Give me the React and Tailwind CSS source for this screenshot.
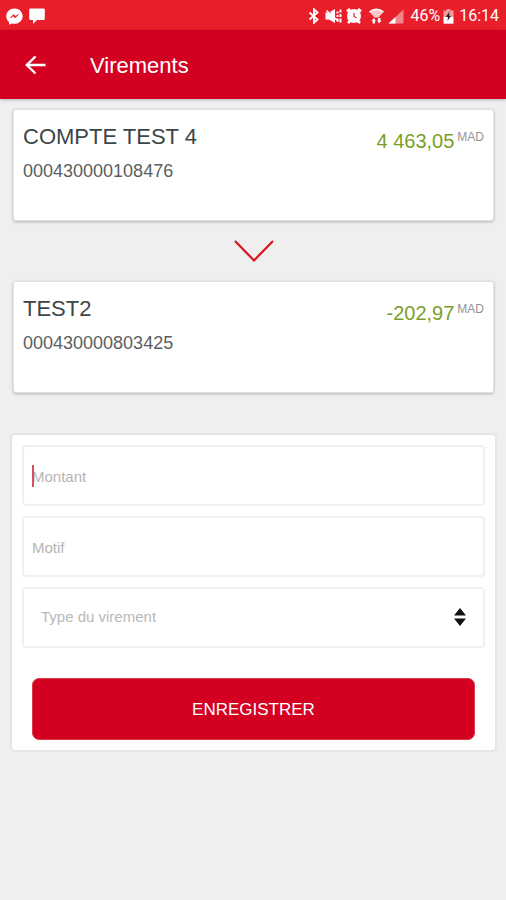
import React, { useState } from 'react';

const accounts = [
  { name: 'COMPTE TEST 4', number: '000430000108476', balance: '4 463,05' },
  { name: 'TEST2', number: '000430000803425', balance: '-202,97' },
];

function StatusBar() {
  return (
    <div className="flex items-center justify-between h-[30px] pl-[6px] pr-[7px] pt-[2px] bg-[#e91e2b] text-white">
      <div className="flex items-center gap-[6px]">
        <svg width="17" height="17" viewBox="0 0 17 17">
          <path d="M8.500 .5C3.900.5.3 3.900.3 8.200c0 2.300 1 4.300 2.700 5.700v2.800l2.700-1.300c.9.300 1.800.4 2.800.4 4.600 0 8.200-3.400 8.200-7.600S13.100.5 8.500.5z" fill="#fff" />
          <path d="M4.200 9.800l3.300-3.200 2 1.700 3-1.900-3.200 3.400-2-1.700z" fill="#e91e2b" stroke="#e91e2b" strokeWidth=".6" />
        </svg>
        <svg width="16" height="16" viewBox="0 0 16 16" fill="#fff">
          <path d="M1.500 .5h13a1.300 1.300 0 0 1 1.300 1.300v9a1.300 1.300 0 0 1-1.300 1.300H8L4 16v-3.900H1.500A1.300 1.300 0 0 1 .2 10.800v-9A1.300 1.300 0 0 1 1.500.5z" />
        </svg>
      </div>
      <div className="flex items-center">
        <svg width="12" height="16" viewBox="0 0 12 16" fill="none" stroke="#fff" strokeWidth="1.800">
          <path d="M1.500 4.500l8 7L6 14.800V1.200l3.500 3.300-8 7" />
        </svg>
        <svg className="ml-[5px]" width="17" height="16" viewBox="0 0 17 16" fill="#fff">
          <path d="M.5 4.500h3.500L10 1v14l-6-3.500H.5z" />
          <path d="M11.500 3.500h2v2h-2zM11.500 7h2v2h-2zM11.500 10.500h2v3h-2zM14.500 1.500h2v3h-2zM14.500 6h2v3h-2zM14.500 10.500h2v4h-2z" />
          <path d="M1 1l5 5" stroke="#e91e2b" strokeWidth="1.200" />
          <path d="M1.500 2.500l12 11" stroke="#fff" strokeWidth="1.500" />
        </svg>
        <svg className="ml-[4px]" width="16" height="16" viewBox="0 0 16 16">
          <path d="M1 3.500L4 .9M15 3.500L12 .9M2 15l3-3M14 15l-3-3" stroke="#fff" strokeWidth="2.600" />
          <circle cx="8" cy="8" r="7" fill="#fff" />
          <path d="M8 4.800v3.700l2.500 1.300" stroke="#e91e2b" strokeWidth="1.200" fill="none" />
        </svg>
        <svg className="ml-[7px]" width="15" height="16" viewBox="0 0 15 16" fill="#fff">
          <path d="M.5 4C4.500.3 10.500.3 14.500 4l-5 5.500h-4z" opacity=".75" />
          <path d="M.5 4C4.500.3 10.500.3 14.500 4" fill="none" stroke="#fff" strokeWidth="1.300" />
          <path d="M4.800 10l2.200 3h-1v2.500H3.600V13h-1zM10.200 15.500l-2.200-3h1V10h2.400v2.500h1z" />
        </svg>
        <svg className="ml-[4px]" width="16" height="15" viewBox="0 0 16 15">
          <path d="M15.500 .5v14H.5z" fill="#fff" opacity=".45" />
          <path d="M7.500 8v6.500h-7z" fill="#fff" />
        </svg>
        <span className="ml-[6px] font-[Roboto,sans-serif] text-base leading-5">46%</span>
        <svg className="ml-[3px]" width="11" height="15" viewBox="0 0 11 15">
          <path d="M3.500 0h4v1.500h3V8H.5V1.500h3z" fill="#fff" opacity=".55" />
          <path d="M.5 8h10v6.700H.5z" fill="#fff" />
          <path d="M6.500 2.500L2.800 8h2.200L4.500 12 8 6.800H6z" fill="#222" />
        </svg>
        <span className="ml-[5px] font-[Roboto,sans-serif] text-base leading-5">16:14</span>
      </div>
    </div>
  );
}

function AccountCard({ account }) {
  return (
    <section className="flex justify-between items-start h-28 px-[9px] pt-3 bg-white rounded-[3px] border border-[#e2e2e2] shadow-[0_1px_3px_rgba(0,0,0,0.25)]">
      <div>
        <h2 className="text-[22px] leading-[30px] text-[#3c4647]">{account.name}</h2>
        <p className="mt-1 text-[18px] leading-[30px] text-[#5a6061]">{account.number}</p>
      </div>
      <div className="flex items-start gap-[3px] pt-1">
        <span className="text-[20px] leading-[30px] text-[#7a9f27]">{account.balance}</span>
        <span className="pt-px text-xs leading-5 text-[#949494]">MAD</span>
      </div>
    </section>
  );
}

export default function App() {
  const [montant, setMontant] = useState('');
  const [motif, setMotif] = useState('');
  const [type, setType] = useState('');

  const fieldClass =
    'block w-full h-[61px] px-[8px] pt-[2px] border-2 border-[#f0f0f0] rounded-[4px] bg-white text-[15px] text-[#444] placeholder:text-[#b5b5b5] placeholder:opacity-100 outline-none';

  return (
    <div className="min-h-screen bg-[#efefef] font-['Liberation_Sans',Arial,sans-serif]">
      <StatusBar />
      <header className="flex items-center h-[69px] pl-[25px] pt-[2px] bg-[#d30022] text-white shadow-[0_1px_3px_rgba(0,0,0,0.25)]">
        <button type="button" aria-label="Retour">
          <svg width="21" height="20" viewBox="0 0 21 20" fill="none" stroke="#fff" strokeWidth="2.400">
            <path d="M20.500 9H2M10.500 0.500L1.800 9l8.700 8.500" />
          </svg>
        </button>
        <h1 className="ml-11 text-[22px] leading-7">Virements</h1>
      </header>

      <main className="pl-[10px] pr-[9px] pt-[10px]">
        <div className="px-[3px]">
          <AccountCard account={accounts[0]} />
          <div className="flex items-center justify-center h-[60px]">
            <svg width="40" height="23" viewBox="0 0 40 23" fill="none" stroke="#d8141f" strokeWidth="2.200">
              <path d="M1 1l19 19.500L39 1" />
            </svg>
          </div>
          <AccountCard account={accounts[1]} />
        </div>

        <form
          className="mt-10 p-[10px] bg-white border-2 border-[#e6e6e6] rounded-[5px]"
          onSubmit={(e) => e.preventDefault()}
        >
          <div className="flex flex-col gap-[10px]">
            {/* caret shown while the amount is empty */}
            <div className="relative">
              <input
                className={fieldClass}
                aria-label="Montant"
                placeholder="Montant"
                inputMode="decimal"
                value={montant}
                onChange={(e) => setMontant(e.target.value)}
              />
              {!montant && (
                <span className="absolute left-[10px] top-[20px] w-[2px] h-[22px] bg-[#d8505a] pointer-events-none" />
              )}
            </div>
            <input
              className={fieldClass}
              aria-label="Motif"
              placeholder="Motif"
              value={motif}
              onChange={(e) => setMotif(e.target.value)}
            />
            <div className="relative">
              <select
                className="block w-full h-[61px] pl-[17px] pr-10 border-2 border-[#f0f0f0] rounded-[4px] bg-white text-[15px] text-[#b9b9b9] appearance-none outline-none"
                aria-label="Type du virement"
                value={type}
                onChange={(e) => setType(e.target.value)}
              >
                <option value="">Type du virement</option>
              </select>
              <svg
                className="absolute right-[19px] top-[21px] pointer-events-none"
                width="12"
                height="18"
                viewBox="0 0 12 18"
                fill="#111"
              >
                <path d="M6 0l6 7.500H0zM0 10.500h12L6 18z" />
              </svg>
            </div>
          </div>
          <div className="px-[10px] mt-[30px]">
            <button
              type="submit"
              className="block w-full h-[62px] pt-[2px] rounded-[7px] border border-[#dc3a45] bg-[#d30022] text-white text-[17px] leading-6"
            >
              ENREGISTRER
            </button>
          </div>
        </form>
      </main>
    </div>
  );
}
